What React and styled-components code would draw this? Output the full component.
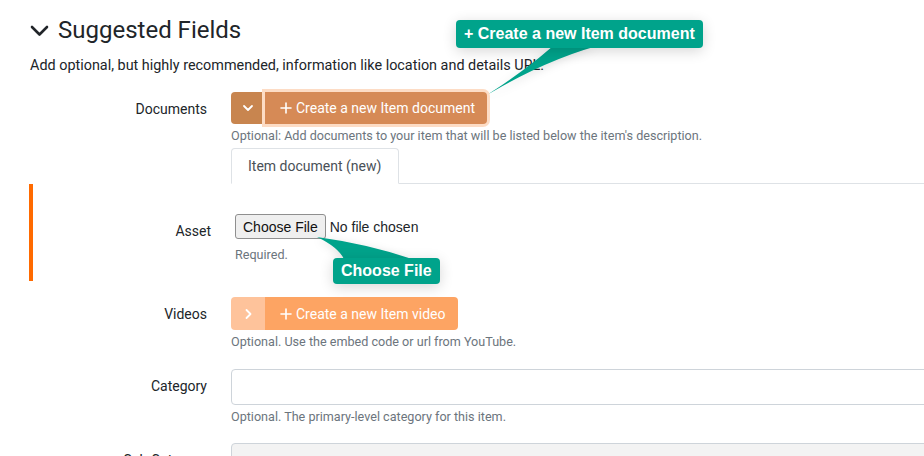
import React from 'react'
import styled, { createGlobalStyle } from 'styled-components'

const GlobalStyle = createGlobalStyle`
  body {
    margin: 0;
    background: #fff;
    color: #212529;
    font-family: Roboto, "Liberation Sans", Arial, sans-serif;
    overflow: hidden;
  }
`

const Page = styled.div`
  position: relative;
  width: 1100px;
  padding: 16px 0 40px 30px;
`

const Heading = styled.h2`
  display: flex;
  align-items: center;
  gap: 9px;
  margin: 0;
  font-size: 24px;
  line-height: 29px;
  font-weight: 400;
`

const Intro = styled.p`
  margin: 10px 0 16px;
  font-size: 14.4px;
  line-height: 21px;
`

const Row = styled.div`
  display: grid;
  grid-template-columns: ${p => p.$label || 177}px 1fr;
  column-gap: 24px;
  margin-bottom: ${p => p.$gap || 0}px;
`

const Label = styled.label`
  text-align: right;
  font-size: 14px;
  line-height: 20px;
  padding-top: 7px;
`

const Field = styled.div`
  display: flex;
  flex-direction: column;
  align-items: flex-start;
`

const Help = styled.small`
  display: block;
  margin-top: ${p => p.$top || 3}px;
  font-size: 12.6px;
  line-height: 18px;
  color: #6c757d;
`

const ButtonGroup = styled.div`
  display: inline-flex;
  height: ${p => p.$height || 32}px;
  border-radius: 4px;
`

const Toggle = styled.button`
  width: 34px;
  border: 0;
  padding: 0;
  border-radius: 4px 0 0 4px;
  background: ${p => p.$bg};
  display: flex;
  align-items: center;
  justify-content: center;
`

const AddButton = styled.button`
  position: relative;
  display: flex;
  align-items: center;
  gap: 4px;
  padding: 0 12px 0 15px;
  border: 0;
  border-radius: 0 4px 4px 0;
  background: ${p => p.$bg};
  color: #fff;
  font-family: Roboto, "Liberation Sans", Arial, sans-serif;
  font-size: 14px;
  box-shadow: ${p => (p.$ring ? `0 0 0 3px ${p.$ring}` : 'none')};
  z-index: 1;
`

const TabBar = styled.div`
  display: flex;
  width: 100%;
  margin-top: 3px;
  border-bottom: 1px solid #dee2e6;
`

const Tab = styled.div`
  margin-bottom: -1px;
  padding: 7px 17px 7px 16px;
  font-size: 14px;
  line-height: 20px;
  color: #495057;
  background: #fff;
  border: 1px solid #dee2e6;
  border-bottom-color: #fff;
  border-radius: 4px 4px 0 0;
`

const Pane = styled.div`
  margin-left: -1px;
  padding: 30px 0 17px;
  border-left: 4px solid #ff6a00;
`

const FileInput = styled.input.attrs({ type: 'file' })`
  height: 25px;
  font: 14px "Liberation Sans", Arial, sans-serif;
  color: #212529;

  &::file-selector-button {
    height: 25px;
    margin-right: 4px;
    padding: 0 7px;
    font: inherit;
    color: #111;
    background: #efefef;
    border: 1px solid #8f8f8f;
    border-radius: 3px;
  }
`

const TextInput = styled.input`
  box-sizing: border-box;
  width: 100%;
  height: 36px;
  border: 1px solid #ced4da;
  border-radius: 4px;
  background: ${p => (p.disabled ? '#f3f3f3' : '#fff')};
`

const Tip = styled.div`
  position: absolute;
  left: ${p => p.$x}px;
  top: ${p => p.$y}px;
  height: ${p => p.$h}px;
  padding: 0 8px;
  font: bold 16px "Liberation Sans", Arial, sans-serif;
  line-height: ${p => p.$h}px;
  border-radius: 4px;
  background: #00a38b;
  color: #fff;
  white-space: nowrap;
  box-shadow: 0 3px 14px rgba(0, 0, 0, 0.16);
`

const Tails = styled.svg`
  position: absolute;
  left: 0;
  top: 0;
  pointer-events: none;
  filter: drop-shadow(0 2px 5px rgba(0, 0, 0, 0.12));
`

const Chevron = ({ dir = 'down', size = 12, stroke = '#fff', width = 1.8 }) => (
  <svg width={size} height={size} viewBox="0 0 12 12" fill="none" stroke={stroke}
    strokeWidth={width} strokeLinecap="round" strokeLinejoin="round">
    {dir === 'down' ? <path d="M2 4l4 4 4-4" /> : <path d="M4.5 2l4 4-4 4" />}
  </svg>
)

const Plus = () => (
  <svg width="12" height="12" viewBox="0 0 12 12" stroke="#fff" strokeWidth="1.6" strokeLinecap="round">
    <path d="M6 1v10M1 6h10" />
  </svg>
)

const App = () => {
  return (
    <>
      <GlobalStyle />
      <Page>
        <Heading>
          <svg width="19" height="12" viewBox="0 0 19 12" fill="none" stroke="#212529"
            strokeWidth="2.6" strokeLinecap="round" strokeLinejoin="round">
            <path d="M2 2l7.5 7.5L17 2" />
          </svg>
          Suggested Fields
        </Heading>
        <Intro>Add optional, but highly recommended, information like location and details URL.</Intro>

        <Row>
          <Label>Documents</Label>
          <Field>
            <ButtonGroup>
              <Toggle $bg="#c8854f"><Chevron dir="down" /></Toggle>
              <AddButton $bg="#d68a56" $ring="#fddcc5"><Plus />Create a new Item document</AddButton>
            </ButtonGroup>
            <Help>Optional: Add documents to your item that will be listed below the item's description.</Help>
            <TabBar>
              <Tab>Item document (new)</Tab>
            </TabBar>
          </Field>
        </Row>

        <Pane>
          <Row $label={178}>
            <Label>Asset</Label>
            <Field>
              <FileInput />
              <Help $top={7}>Required.</Help>
            </Field>
          </Row>
        </Pane>

        <Row $gap={18} style={{ marginTop: 16 }}>
          <Label>Videos</Label>
          <Field>
            <ButtonGroup $height={33}>
              <Toggle $bg="#fec39b"><Chevron dir="right" /></Toggle>
              <AddButton $bg="#fda463"><Plus />Create a new Item video</AddButton>
            </ButtonGroup>
            <Help>Optional. Use the embed code or url from YouTube.</Help>
          </Field>
        </Row>

        <Row $gap={17}>
          <Label>Category</Label>
          <Field>
            <TextInput />
            <Help>Optional. The primary-level category for this item.</Help>
          </Field>
        </Row>

        <Row>
          <Label>Sub Category</Label>
          <Field>
            <TextInput disabled />
          </Field>
        </Row>

        <Tails width="924" height="456">
          <path d="M553 46 Q520 75 477 101 Q540 62 597 46 Z" fill="#00a38b" />
          <path d="M317 237 Q368 244 412 259 L344 259 Q338 247 317 237 Z" fill="#00a38b" />
        </Tails>
        <Tip $x={456} $y={20} $h={28}>+ Create a new Item document</Tip>
        <Tip $x={333} $y={258} $h={26}>Choose File</Tip>
      </Page>
    </>
  )
}

export default App
